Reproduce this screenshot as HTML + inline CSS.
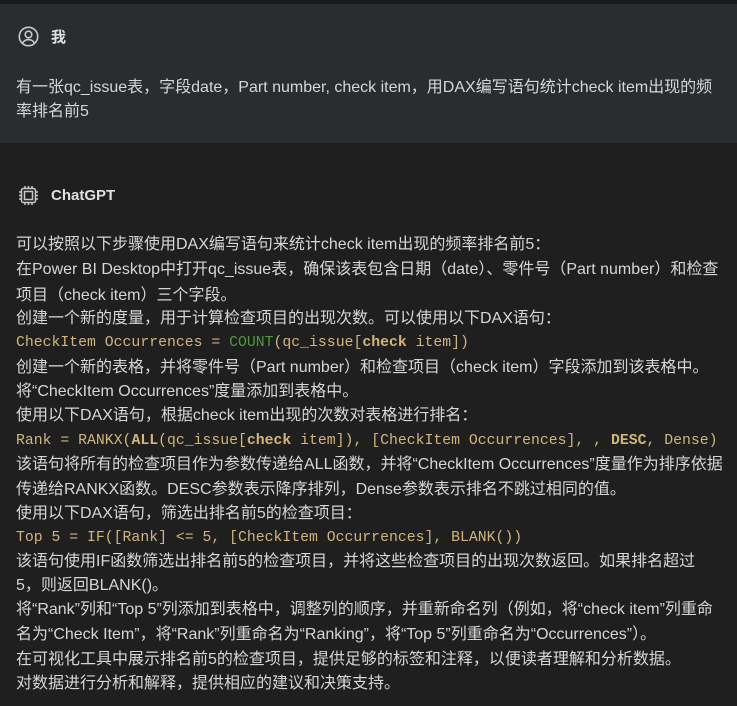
<!DOCTYPE html>
<html><head><meta charset="utf-8"><style>
body{margin:0;width:737px;height:706px;background:#1f1f1f;overflow:hidden;position:relative;font-family:"Liberation Sans","Noto Sans CJK SC",sans-serif;color:#d6d6d6;font-size:16px}
.top{position:absolute;left:0;top:0;width:737px;height:4px;background:#1b1b1b}
.user{position:absolute;left:0;top:4px;width:737px;height:139px;background:#2a2d2f}
.l{position:absolute;left:16px;height:24px;line-height:24px;white-space:nowrap}
.c{font-family:"Liberation Mono",monospace;font-size:14.8px;color:#d1b57c}
.g{color:#4f9a3d}
b{font-weight:bold}
.h{font-weight:bold;font-size:15px;color:#e0e0e0}
</style></head><body>
<div class="top"></div>
<div class="user"></div>
<svg style="position:absolute;left:18px;top:26px" width="21" height="21" viewBox="0 0 21 21" fill="none" stroke="#c8c8c8" stroke-width="1.6"><circle cx="10.5" cy="10.5" r="9.2"/><circle cx="10.5" cy="8.5" r="3.3"/><path d="M4.5 17.2c1.5-2.6 3.7-3.6 6-3.6s4.5 1 6 3.6"/></svg>
<div class="l h" style="left:51px;top:26px">我</div>
<div class="l" style="top:76px">有一张qc_issue表，字段date，Part number, check item，用DAX编写语句统计check item出现的频</div>
<div class="l" style="top:100px">率排名前5</div>
<svg style="position:absolute;left:18px;top:185px" width="21" height="21" viewBox="0 0 21 21" fill="none" stroke="#c8c8c8" stroke-width="1.5"><rect x="3.5" y="3.5" width="14" height="14" rx="2"/><rect x="6.5" y="6.5" width="8" height="8"/><path d="M7 1v2.5M10.5 1v2.5M14 1v2.5M7 17.5V20M10.5 17.5V20M14 17.5V20M1 7h2.5M1 10.5h2.5M1 14h2.5M17.5 7H20M17.5 10.5H20M17.5 14H20"/></svg>
<div class="l h" style="left:51px;top:184px">ChatGPT</div>
<div class="l" style="top:233px">可以按照以下步骤使用DAX编写语句来统计check item出现的频率排名前5：</div>
<div class="l" style="top:258px">在Power BI Desktop中打开qc_issue表，确保该表包含日期（date）、零件号（Part number）和检查</div>
<div class="l" style="top:284px">项目（check item）三个字段。</div>
<div class="l" style="top:307px">创建一个新的度量，用于计算检查项目的出现次数。可以使用以下DAX语句：</div>
<div class="l c" style="top:331px">CheckItem Occurrences = <span class="g">COUNT</span>(qc_issue[<b>check</b> item])</div>
<div class="l" style="top:356px">创建一个新的表格，并将零件号（Part number）和检查项目（check item）字段添加到该表格中。</div>
<div class="l" style="top:380px">将“CheckItem Occurrences”度量添加到表格中。</div>
<div class="l" style="top:404px">使用以下DAX语句，根据check item出现的次数对表格进行排名：</div>
<div class="l c" style="top:429px">Rank = RANKX(<b>ALL</b>(qc_issue[<b>check</b> item]), [CheckItem Occurrences], , <b>DESC</b>, Dense)</div>
<div class="l" style="top:453px">该语句将所有的检查项目作为参数传递给ALL函数，并将“CheckItem Occurrences”度量作为排序依据</div>
<div class="l" style="top:478px">传递给RANKX函数。DESC参数表示降序排列，Dense参数表示排名不跳过相同的值。</div>
<div class="l" style="top:502px">使用以下DAX语句，筛选出排名前5的检查项目：</div>
<div class="l c" style="top:526px">Top 5 = IF([Rank] &lt;= 5, [CheckItem Occurrences], BLANK())</div>
<div class="l" style="top:550px">该语句使用IF函数筛选出排名前5的检查项目，并将这些检查项目的出现次数返回。如果排名超过</div>
<div class="l" style="top:574px">5，则返回BLANK()。</div>
<div class="l" style="top:598px">将“Rank”列和“Top 5”列添加到表格中，调整列的顺序，并重新命名列（例如，将“check item”列重命</div>
<div class="l" style="top:623px">名为“Check Item”，将“Rank”列重命名为“Ranking”，将“Top 5”列重命名为“Occurrences”）。</div>
<div class="l" style="top:648px">在可视化工具中展示排名前5的检查项目，提供足够的标签和注释，以便读者理解和分析数据。</div>
<div class="l" style="top:672px">对数据进行分析和解释，提供相应的建议和决策支持。</div>
</body></html>
